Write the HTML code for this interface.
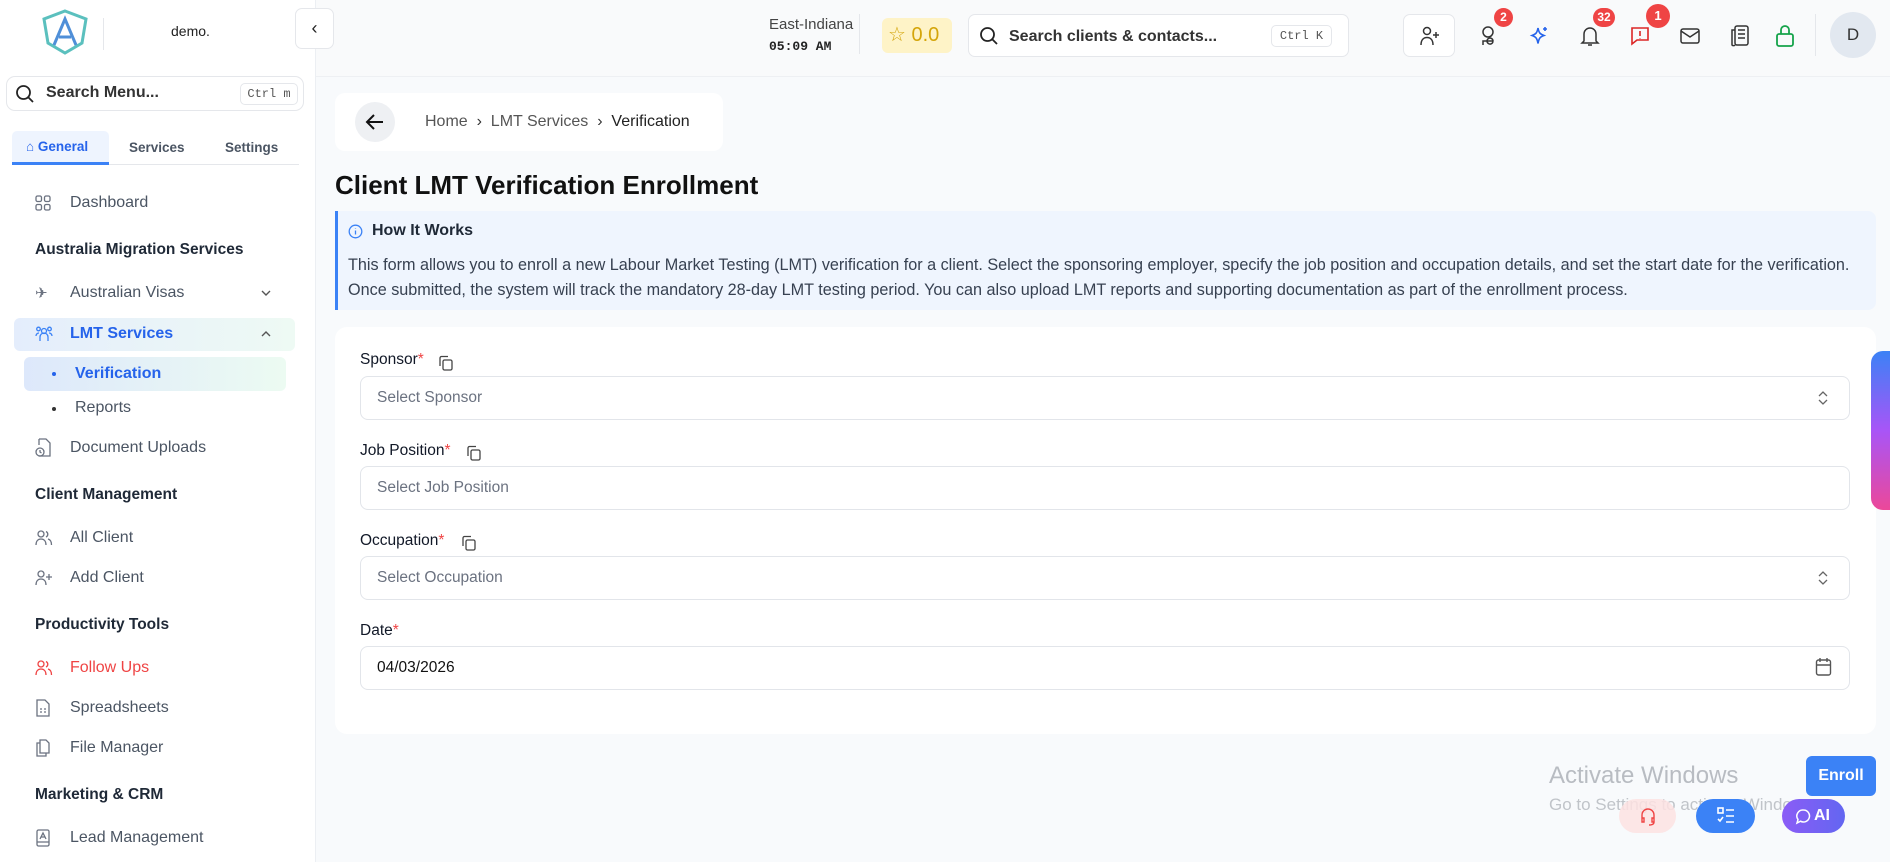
<!DOCTYPE html>
<html><head><meta charset="utf-8"><style>
*{box-sizing:border-box;margin:0;padding:0}
body{width:1890px;height:862px;overflow:hidden;background:#f8fafc;font-family:"Liberation Sans",sans-serif;color:#1f2937;position:relative}
.a{position:absolute}
.side{left:0;top:0;width:316px;height:862px;background:#fff;border-right:1px solid #eceff3}
.hdr{left:316px;top:0;width:1574px;height:77px;background:#f9fafb;border-bottom:1px solid #eef0f3}
.mi{left:70px;font-size:16px;color:#4b5563;transform:translateY(-50%)}
.ic{left:35px;transform:translateY(-50%)}
.h{left:35px;font-size:15.5px;font-weight:bold;color:#1f2937;transform:translateY(-50%)}
svg{display:block}
.lbl{left:360px;font-size:15.5px;color:#111827;transform:translateY(-50%)}
.lbl b{color:#ef4444;font-weight:normal}
.inp{left:360px;width:1490px;height:44px;border:1px solid #e2e5ea;border-radius:8px;background:#fff;font-size:15.5px;color:#6b7280;padding-left:16px;line-height:42px}
.badge{background:#ef4444;color:#fff;font-size:12px;font-weight:bold;border-radius:50%;text-align:center}
</style></head><body>
<div class="a side"></div>
<div class="a hdr"></div>
<svg class="a" style="left:40px;top:9px" width="50" height="46" viewBox="0 0 50 46"><path d="M25 2 L46 10 L42 34 L25 44 L8 34 L4 10 Z" fill="none" stroke="#5bc0be" stroke-width="3"/><path d="M14 36 L25 10 L36 36 M19 28 L31 28" fill="none" stroke="#4f8fd8" stroke-width="3"/></svg>
<div class="a" style="left:103px;top:18px;width:1px;height:32px;background:#e5e7eb"></div>
<div class="a" style="left:171px;top:23px;font-size:14px;color:#222">demo.</div>
<div class="a" style="left:295px;top:8px;width:39px;height:41px;border:1px solid #e5e7eb;border-radius:7px;background:#fff;text-align:center;line-height:38px;font-size:18px;color:#222">‹</div>
<div class="a" style="left:6px;top:76px;width:298px;height:35px;border:1px solid #e5e7eb;border-radius:9px;background:#fff"></div>
<svg class="a" style="left:15px;top:84px" width="20" height="20" viewBox="0 0 20 20"><circle cx="8.5" cy="8.5" r="6.5" fill="none" stroke="#222" stroke-width="1.8"/><path d="M13.5 13.5 18 18" stroke="#222" stroke-width="1.8"/></svg>
<div class="a" style="left:46px;top:84px;font-size:16px;font-weight:bold;color:#333">Search Menu...</div>
<div class="a" style="left:240px;top:83px;width:58px;height:22px;border:1px solid #e5e7eb;border-radius:5px;font-family:'Liberation Mono';font-size:12px;color:#555;text-align:center;line-height:20px">Ctrl m</div>
<div class="a" style="left:12px;top:131px;width:287px;height:34px;border-bottom:1px solid #e5e7eb"></div>
<div class="a" style="left:12px;top:131px;width:97px;height:34px;background:#eef4fe;border-bottom:3px solid #3b82f6;border-radius:5px 5px 0 0;font-size:13.5px;font-weight:bold;color:#2563eb;line-height:32px;padding-left:14px">⌂ General</div>
<div class="a" style="left:129px;top:140px;font-size:13.5px;font-weight:bold;color:#4b5563">Services</div>
<div class="a" style="left:225px;top:140px;font-size:13.5px;font-weight:bold;color:#4b5563">Settings</div>
<svg class="a ic" style="top:203px" width="16" height="16" viewBox="0 0 16 16" fill="none" stroke="#6b7280" stroke-width="1.3"><rect x="1" y="1" width="5.5" height="5.5" rx="1.5"/><rect x="9.5" y="1" width="5.5" height="5.5" rx="1.5"/><rect x="1" y="9.5" width="5.5" height="5.5" rx="1.5"/><rect x="9.5" y="9.5" width="5.5" height="5.5" rx="1.5"/></svg>
<div class="a mi" style="top:203px">Dashboard</div>
<div class="a h" style="top:250px">Australia Migration Services</div>
<div class="a ic" style="top:293px;font-size:15px;color:#6b7280">✈</div>
<div class="a mi" style="top:293px">Australian Visas</div>
<svg class="a" style="left:260px;top:288px" width="12" height="10" viewBox="0 0 12 10" fill="none" stroke="#555" stroke-width="1.4"><path d="M2 3l4 4 4-4"/></svg>
<div class="a" style="left:14px;top:318px;width:281px;height:33px;border-radius:6px;background:linear-gradient(90deg,#e4edfc,#eefaf4)"></div>
<svg class="a ic" style="top:334px" width="18" height="18" viewBox="0 0 18 18" fill="none" stroke="#3b82f6" stroke-width="1.3"><circle cx="9" cy="6" r="2.5"/><circle cx="3.5" cy="4" r="1.8"/><circle cx="14.5" cy="4" r="1.8"/><path d="M5 16v-4a4 4 0 0 1 8 0v4M1 11a3 3 0 0 1 3-3M17 11a3 3 0 0 0-3-3"/></svg>
<div class="a mi" style="top:334px;color:#2563eb;font-weight:bold">LMT Services</div>
<svg class="a" style="left:260px;top:329px" width="12" height="10" viewBox="0 0 12 10" fill="none" stroke="#555" stroke-width="1.4"><path d="M2 7l4-4 4 4"/></svg>
<div class="a" style="left:24px;top:357px;width:262px;height:34px;border-radius:6px;background:linear-gradient(90deg,#dde8fb,#ecfbf2)"></div>
<div class="a" style="left:52px;top:372px;width:4px;height:4px;border-radius:50%;background:#2563eb"></div>
<div class="a mi" style="left:75px;top:374px;color:#2563eb;font-weight:bold">Verification</div>
<div class="a" style="left:52px;top:407px;width:4px;height:4px;border-radius:50%;background:#333"></div>
<div class="a mi" style="left:75px;top:408px">Reports</div>
<svg class="a ic" style="top:448px" width="16" height="20" viewBox="0 0 16 20" fill="none" stroke="#6b7280" stroke-width="1.3"><path d="M4 1h7l4 4v13H4M4 1v6"/><circle cx="5" cy="14" r="4"/><path d="M5 12v2l1.5 1"/></svg>
<div class="a mi" style="top:448px">Document Uploads</div>
<div class="a h" style="top:495px">Client Management</div>
<svg class="a ic" style="top:538px" width="18" height="18" viewBox="0 0 18 18" fill="none" stroke="#6b7280" stroke-width="1.3"><circle cx="6" cy="5" r="3"/><path d="M1 16c0-4 2-6 5-6s5 2 5 6M11 2.5a3 3 0 0 1 0 5.5M13 10c2 .5 3.5 2.5 3.5 6"/></svg>
<div class="a mi" style="top:538px">All Client</div>
<svg class="a ic" style="top:578px" width="18" height="18" viewBox="0 0 18 18" fill="none" stroke="#6b7280" stroke-width="1.3"><circle cx="6" cy="5" r="3"/><path d="M1 16c0-4 2-6 5-6s5 2 5 6M14 5v6M11 8h6"/></svg>
<div class="a mi" style="top:578px">Add Client</div>
<div class="a h" style="top:625px">Productivity Tools</div>
<svg class="a ic" style="top:668px" width="18" height="18" viewBox="0 0 18 18" fill="none" stroke="#ef4444" stroke-width="1.3"><circle cx="6" cy="5" r="3"/><path d="M1 16c0-4 2-6 5-6s5 2 5 6M11 2.5a3 3 0 0 1 0 5.5M13 10c2 .5 3.5 2.5 3.5 6"/></svg>
<div class="a mi" style="top:668px;color:#ef4444">Follow Ups</div>
<svg class="a ic" style="top:708px" width="16" height="18" viewBox="0 0 16 18" fill="none" stroke="#6b7280" stroke-width="1.3"><path d="M2 1h8l4 4v12H2z M5 10h2M9 10h2M5 13h2M9 13h2"/></svg>
<div class="a mi" style="top:708px">Spreadsheets</div>
<svg class="a ic" style="top:748px" width="16" height="18" viewBox="0 0 16 18" fill="none" stroke="#6b7280" stroke-width="1.3"><path d="M5 1h6l3 3v10H5z M5 4H2v13h9v-3"/></svg>
<div class="a mi" style="top:748px">File Manager</div>
<div class="a h" style="top:795px">Marketing &amp; CRM</div>
<svg class="a ic" style="top:838px" width="16" height="18" viewBox="0 0 16 18" fill="none" stroke="#6b7280" stroke-width="1.3"><rect x="2" y="1" width="12" height="16" rx="1.5"/><path d="M5 10l3-6 3 6M6 8h4M2 13h12"/></svg>
<div class="a mi" style="top:838px">Lead Management</div>
<div class="a" style="left:769px;top:16px;font-size:15px;color:#444">East-Indiana</div>
<div class="a" style="left:769px;top:39px;font-size:13px;font-family:'Liberation Mono';font-weight:bold;color:#222">05:09 AM</div>
<div class="a" style="left:859px;top:14px;width:1px;height:40px;background:#e5e7eb"></div>
<div class="a" style="left:882px;top:18px;width:70px;height:35px;background:#fef3c7;border-radius:6px;font-size:20px;color:#d4a50a;line-height:35px;padding-left:6px">☆ 0.0</div>
<div class="a" style="left:968px;top:14px;width:381px;height:43px;border:1px solid #e5e7eb;border-radius:7px;background:#fff"></div>
<svg class="a" style="left:979px;top:26px" width="20" height="20" viewBox="0 0 20 20"><circle cx="8.5" cy="8.5" r="6.5" fill="none" stroke="#222" stroke-width="1.8"/><path d="M13.5 13.5 18 18" stroke="#222" stroke-width="1.8"/></svg>
<div class="a" style="left:1009px;top:28px;font-size:16px;font-weight:bold;color:#333">Search clients &amp; contacts...</div>
<div class="a" style="left:1271px;top:25px;width:61px;height:22px;border:1px solid #e5e7eb;border-radius:5px;font-family:'Liberation Mono';font-size:12px;color:#555;text-align:center;line-height:20px">Ctrl K</div>
<div class="a" style="left:1403px;top:14px;width:52px;height:43px;border:1px solid #e5e7eb;border-radius:7px;background:#fff"></div>
<svg class="a" style="left:1419px;top:25px" width="22" height="22" viewBox="0 0 22 22" fill="none" stroke="#333" stroke-width="1.5"><circle cx="8" cy="6" r="3.5"/><path d="M2 20c0-5 2.5-7.5 6-7.5s6 2.5 6 7.5M17 7v6M14 10h6"/></svg>
<svg class="a" style="left:1479px;top:25px" width="22" height="22" viewBox="0 0 22 22" fill="none" stroke="#333" stroke-width="1.5"><circle cx="9" cy="7" r="5"/><path d="M4 20v-4h10M14 16a3 3 0 1 0 0 .1"/></svg>
<div class="a badge" style="left:1494px;top:8px;width:19px;height:19px;line-height:19px">2</div>
<svg class="a" style="left:1528px;top:25px" width="22" height="22" viewBox="0 0 22 22" fill="none" stroke="#2563eb" stroke-width="1.6"><path d="M10 3c1 5 2 6 6 7.5-4 1.5-5 2.5-6 8-1-5.5-2-6.5-6-8 4-1.5 5-2.5 6-7.5zM17 2v4M15 4h4"/></svg>
<svg class="a" style="left:1579px;top:24px" width="22" height="24" viewBox="0 0 22 24" fill="none" stroke="#333" stroke-width="1.5"><path d="M5 17V10a6 6 0 0 1 12 0v7l2 2H3zM9 21h4"/></svg>
<div class="a badge" style="left:1593px;top:8px;width:22px;height:19px;line-height:19px;border-radius:10px">32</div>
<svg class="a" style="left:1629px;top:25px" width="22" height="22" viewBox="0 0 22 22" fill="none" stroke="#dc2626" stroke-width="1.6"><path d="M3 3h16v12H8l-5 4zM11 6v5M11 13v.5"/></svg>
<div class="a badge" style="left:1646px;top:4px;width:24px;height:24px;line-height:24px;font-size:13px">1</div>
<svg class="a" style="left:1679px;top:25px" width="22" height="22" viewBox="0 0 22 22" fill="none" stroke="#333" stroke-width="1.5"><rect x="2" y="4" width="18" height="14" rx="2"/><path d="M2 6l9 6 9-6"/></svg>
<svg class="a" style="left:1729px;top:24px" width="22" height="24" viewBox="0 0 22 24" fill="none" stroke="#333" stroke-width="1.5"><rect x="6" y="2" width="13" height="19" rx="2"/><path d="M6 6H3v15a2 2 0 0 0 3 0M9 6h7M9 10h7M9 14h7"/></svg>
<svg class="a" style="left:1774px;top:23px" width="22" height="26" viewBox="0 0 22 26" fill="none" stroke="#16a34a" stroke-width="1.8"><rect x="3" y="11" width="16" height="12" rx="2"/><path d="M7 11V7a4 4 0 0 1 8 0v4"/></svg>
<div class="a" style="left:1815px;top:14px;width:1px;height:42px;background:#e5e7eb"></div>
<div class="a" style="left:1830px;top:12px;width:46px;height:46px;border-radius:50%;background:#e2e8f0;text-align:center;line-height:46px;font-size:17px;color:#333">D</div>
<div class="a" style="left:335px;top:93px;width:388px;height:58px;background:#fff;border-radius:10px"></div>
<div class="a" style="left:355px;top:102px;width:40px;height:40px;border-radius:50%;background:#eef0f3"></div>
<svg class="a" style="left:364px;top:111px" width="22" height="22" viewBox="0 0 22 22" fill="none" stroke="#111" stroke-width="2"><path d="M19 11H4M10 4l-7 7 7 7"/></svg>
<div class="a" style="left:425px;top:113px;font-size:16px;color:#555">Home &nbsp;<span style="color:#333">›</span>&nbsp; LMT Services &nbsp;<span style="color:#333">›</span>&nbsp; <span style="color:#222">Verification</span></div>
<div class="a" style="left:335px;top:170px;font-size:26px;font-weight:bold;color:#111">Client LMT Verification Enrollment</div>
<div class="a" style="left:335px;top:211px;width:1541px;height:99px;background:#eff5fe;border-left:3px solid #3b82f6;border-radius:0 8px 8px 0"></div>
<svg class="a" style="left:348px;top:224px" width="15" height="15" viewBox="0 0 15 15" fill="none" stroke="#3b82f6" stroke-width="1.3"><circle cx="7.5" cy="7.5" r="6.3"/><path d="M7.5 6.5v4M7.5 4.2v.6"/></svg>
<div class="a" style="left:372px;top:222px;font-size:16px;font-weight:bold;color:#1f2937">How It Works</div>
<div class="a" style="left:348px;top:253px;width:1525px;font-size:16.2px;color:#374151;line-height:25px;white-space:nowrap">This form allows you to enroll a new Labour Market Testing (LMT) verification for a client. Select the sponsoring employer, specify the job position and occupation details, and set the start date for the verification.<br>Once submitted, the system will track the mandatory 28-day LMT testing period. You can also upload LMT reports and supporting documentation as part of the enrollment process.</div>
<div class="a" style="left:335px;top:327px;width:1541px;height:407px;background:#fff;border-radius:12px"></div>
<div class="a lbl" style="top:360px">Sponsor<b>*</b></div>
<div class="a lbl" style="top:451px">Job Position<b>*</b></div>
<div class="a lbl" style="top:541px">Occupation<b>*</b></div>
<div class="a lbl" style="top:631px">Date<b>*</b></div>
<svg class="a" style="left:438px;top:355px" width="16" height="16" viewBox="0 0 16 16" fill="none" stroke="#444" stroke-width="1.3"><rect x="5" y="5" width="9" height="10" rx="1.5"/><path d="M2 11V3a1.5 1.5 0 0 1 1.5-1.5H10"/></svg>
<svg class="a" style="left:466px;top:445px" width="16" height="16" viewBox="0 0 16 16" fill="none" stroke="#444" stroke-width="1.3"><rect x="5" y="5" width="9" height="10" rx="1.5"/><path d="M2 11V3a1.5 1.5 0 0 1 1.5-1.5H10"/></svg>
<svg class="a" style="left:461px;top:535px" width="16" height="16" viewBox="0 0 16 16" fill="none" stroke="#444" stroke-width="1.3"><rect x="5" y="5" width="9" height="10" rx="1.5"/><path d="M2 11V3a1.5 1.5 0 0 1 1.5-1.5H10"/></svg>
<div class="a inp" style="top:376px">Select Sponsor</div>
<div class="a inp" style="top:466px">Select Job Position</div>
<div class="a inp" style="top:556px">Select Occupation</div>
<div class="a inp" style="top:646px;color:#111">04/03/2026</div>
<svg class="a" style="left:1817px;top:389px" width="12" height="18" viewBox="0 0 12 18" fill="none" stroke="#666" stroke-width="1.3"><path d="M2 7l4-4 4 4M2 11l4 4 4-4"/></svg>
<svg class="a" style="left:1817px;top:569px" width="12" height="18" viewBox="0 0 12 18" fill="none" stroke="#666" stroke-width="1.3"><path d="M2 7l4-4 4 4M2 11l4 4 4-4"/></svg>
<svg class="a" style="left:1815px;top:657px" width="17" height="20" viewBox="0 0 17 20" fill="none" stroke="#555" stroke-width="1.4"><rect x="1.5" y="3" width="14" height="15" rx="2"/><path d="M1.5 8h14M5 1v4M12 1v4"/></svg>
<div class="a" style="left:1871px;top:351px;width:19px;height:159px;border-radius:12px 0 0 12px;background:linear-gradient(180deg,#3b82f6,#a855f7 50%,#ec4899)"></div>
<div class="a" style="left:1549px;top:762px;font-size:24px;color:#b8bcc2">Activate Windows</div>
<div class="a" style="left:1549px;top:795px;font-size:17px;color:#c0c4c9">Go to Settings to activate Windows.</div>
<div class="a" style="left:1806px;top:756px;width:70px;height:40px;background:#3b82f6;border-radius:6px;color:#fff;font-size:16px;font-weight:bold;text-align:center;line-height:40px">Enroll</div>
<div class="a" style="left:1619px;top:799px;width:57px;height:34px;background:#fde2e2;border-radius:17px;opacity:.85"></div>
<svg class="a" style="left:1639px;top:806px" width="18" height="20" viewBox="0 0 18 20" fill="none" stroke="#ef4444" stroke-width="1.4"><path d="M3 12V9a6 6 0 0 1 12 0v3M3 12h2v4H3zM13 12h2v4h-2zM15 16c0 2-2 3-5 3"/></svg>
<div class="a" style="left:1696px;top:799px;width:59px;height:34px;background:#3b82f6;border-radius:17px"></div>
<svg class="a" style="left:1716px;top:806px" width="20" height="20" viewBox="0 0 20 20" fill="none" stroke="#fff" stroke-width="1.6"><rect x="2" y="2" width="5" height="5"/><path d="M10 4h8M10 10h8M10 16h8M2 13l2 2 3-4"/></svg>
<div class="a" style="left:1782px;top:799px;width:63px;height:34px;background:linear-gradient(90deg,#8b5cf6,#6366f1);border-radius:17px;color:#fff;font-size:16px;font-weight:bold;line-height:34px;padding-left:32px">AI</div>
<svg class="a" style="left:1795px;top:808px" width="17" height="17" viewBox="0 0 17 17" fill="none" stroke="#fff" stroke-width="1.5"><path d="M8.5 2a6 6 0 1 1-3 11.2L2 15l1-3.5A6 6 0 0 1 8.5 2z"/></svg>
</body></html>
